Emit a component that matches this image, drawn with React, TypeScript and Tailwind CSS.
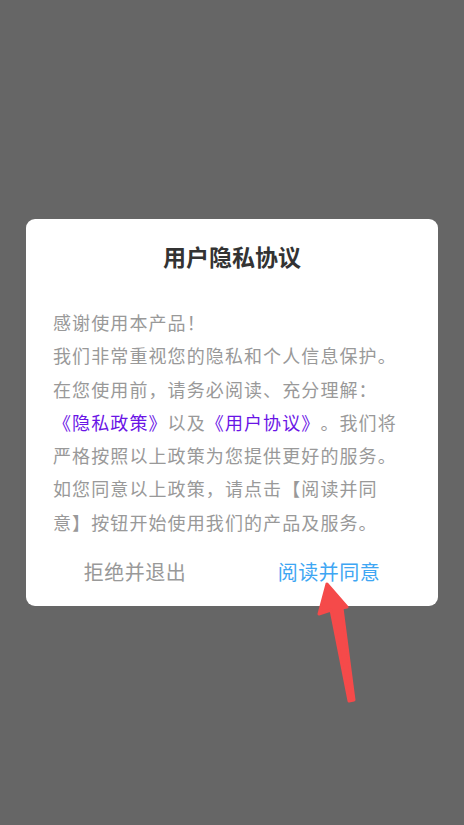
import React from 'react'

const font = { fontFamily: '"Noto Sans CJK SC", "Noto Sans", sans-serif' }

const link = 'text-[#6a14e6]'

function Arrow() {
  return (
    <svg
      className="pointer-events-none absolute left-0 top-0"
      width="464"
      height="825"
      viewBox="0 0 464 825"
    >
      <path
        d="M327 584 L319 614 L331 610 L349 701 L354 700 L342 608 L347 607 Z"
        fill="#f54a4a"
        stroke="#f54a4a"
        strokeWidth="3"
        strokeLinejoin="round"
      />
    </svg>
  )
}

export default function App() {
  return (
    <div
      className="relative flex h-[825px] w-full items-center justify-center bg-[#666666]"
      style={font}
    >
      <div className="flex w-[412px] flex-col rounded-[9px] bg-white pt-[21px] pb-[9px]">
        <h2 className="text-center text-[23px] font-bold leading-[32px] text-[#333333]">
          用户隐私协议
        </h2>

        <div className="mt-[34px] whitespace-nowrap pl-[27px] text-[18px] leading-[33.3px] tracking-[1.1px] text-[#999999] [text-spacing-trim:space-all]">
          <div>感谢使用本产品！</div>
          <div>我们非常重视您的隐私和个人信息保护。</div>
          <div>在您使用前，请务必阅读、充分理解：</div>
          <div>
            <span className={link}>《隐私政策》</span>以及
            <span className={link}>《用户协议》</span>。我们将
          </div>
          <div>严格按照以上政策为您提供更好的服务。</div>
          <div>如您同意以上政策，请点击【阅读并同</div>
          <div>意】按钮开始使用我们的产品及服务。</div>
        </div>

        <div className="mt-[8px] flex h-[50px] px-[12px]">
          <button
            type="button"
            className="flex-1 text-[20px] tracking-[0.5px] text-[#999999]"
          >
            拒绝并退出
          </button>
          <button
            type="button"
            className="flex-1 text-[20px] tracking-[0.5px] text-[#3ea6f3]"
          >
            阅读并同意
          </button>
        </div>
      </div>
      <Arrow />
    </div>
  )
}
